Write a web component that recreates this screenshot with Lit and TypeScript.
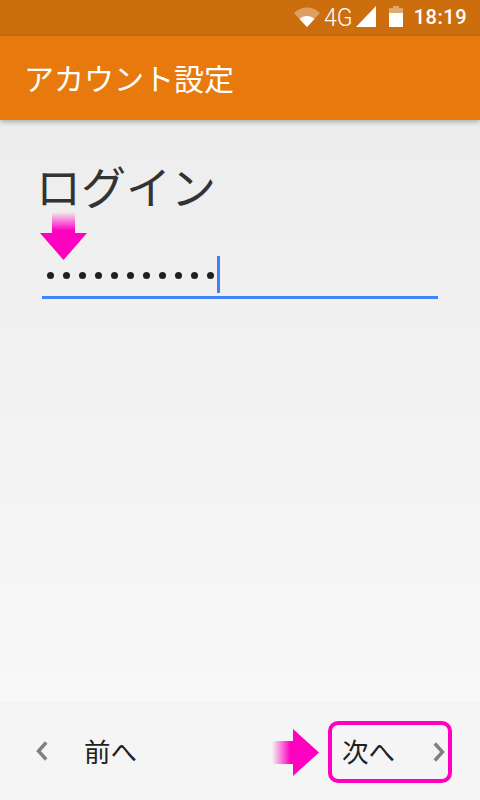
import { LitElement, html, css } from "lit";
import { customElement } from "lit/decorators.js";

@customElement("app-root")
export class AppRoot extends LitElement {
  static styles = css`
    :host {
      display: flex;
      flex-direction: column;
      position: relative;
      width: 480px;
      height: 800px;
      overflow: hidden;
      font-family: Roboto, "Noto Sans CJK JP", sans-serif;
      background: #f5f5f5;
    }
    .status {
      height: 36px;
      background: #cc6d0e;
      display: flex;
      align-items: center;
      justify-content: flex-end;
      color: #fff;
      flex: none;
    }
    .wifi { margin-right: 4px; margin-top: -2px; }
    .net {
      font-size: 26.5px;
      font-weight: 300;
      line-height: 36px;
      margin-right: 4px;
      width: 28px;
      transform: scaleX(0.87);
      transform-origin: left;
      white-space: nowrap;
      position: relative;
      top: -1px;
    }
    .sig { margin-right: 13px; margin-top: -3px; }
    .bat { margin-right: 11px; margin-top: -3px; }
    .time { font-size: 20px; font-weight: 500; margin-right: 13px; letter-spacing: 0.5px; position: relative; top: -1px; }
    .bar {
      height: 84px;
      flex: none;
      background: #e8790d;
      box-shadow: 0 2px 5px rgba(0, 0, 0, 0.28);
      display: flex;
      align-items: center;
      padding-left: 24px;
      color: #fff;
      font-size: 30px;
      position: relative;
      z-index: 1;
    }
    .bar span { position: relative; top: -1px; }
    .content {
      flex: 1;
      background: linear-gradient(#ededed, #f8f8f8);
      padding: 40px 42px 0 36px;
    }
    h1 {
      margin: 0;
      font-size: 45px;
      line-height: 60px;
      font-weight: 400;
      color: #333;
    }
    .field {
      margin: 23px 0 0 6px;
      height: 56px;
      box-sizing: border-box;
      border-bottom: 3px solid #3f84f8;
      display: flex;
      align-items: flex-start;
      padding: 13px 0 0 5px;
    }
    .dots { display: flex; gap: 9px; margin-top: 16px; }
    .dots i { width: 7px; height: 7px; border-radius: 50%; background: #1f1f1f; display: block; }
    .caret { width: 3px; height: 37px; background: #3f84f8; margin-left: 3px; }
    .footer {
      height: 98px;
      flex: none;
      background: #f5f5f5;
      border-top: 1px solid #f0f0f0;
      display: flex;
      align-items: center;
      justify-content: space-between;
      box-sizing: border-box;
      padding: 0 28px 0 36px;
      color: #212121;
      font-size: 26.5px;
    }
    .btn { display: flex; align-items: center; }
    .prev span { margin-left: 36px; margin-bottom: 3px; }
    .prev svg, .next svg { margin-bottom: 1px; }
    .next span { margin-bottom: 3px; }
    .next {
      border: 4px solid #ff00c0;
      border-radius: 10px;
      width: 124px;
      height: 62px;
      box-sizing: border-box;
      justify-content: space-between;
      padding: 0 3px 0 10px;
    }
    .next-wrap { margin-top: 1px; }
    .overlay { position: absolute; pointer-events: none; }
    .down { left: 40px; top: 212px; }
    .right { left: 272px; top: 729px; }
  `;

  render() {
    return html`
      <div class="status">
        <svg class="wifi" width="26" height="20" viewBox="0 0 26 20">
          <path d="M0 6 C7 -1.5 19 -1.5 26 6 L13 20 Z" fill="#fff" fill-opacity="0.35"/>
          <path d="M5.5 12 C9.5 8 16.5 8 20.5 12 L13 20 Z" fill="#fff"/>
        </svg>
        <span class="net">4G</span>
        <svg class="sig" width="20" height="21" viewBox="0 0 20 21"><path d="M20 0V21H0Z" fill="#fff"/></svg>
        <svg class="bat" width="14" height="21" viewBox="0 0 14 21">
          <path d="M4 0H10V2H14V21H0V2H4Z" fill="#fff" fill-opacity="0.4"/>
          <rect x="0" y="7" width="14" height="14" fill="#fff"/>
        </svg>
        <span class="time">18:19</span>
      </div>
      <div class="bar"><span>アカウント設定</span></div>
      <div class="content">
        <h1>ログイン</h1>
        <div class="field">
          <div class="dots">${Array.from({ length: 11 }, () => html`<i></i>`)}</div>
          <div class="caret"></div>
        </div>
      </div>
      <div class="footer">
        <div class="btn prev">
          <svg width="12" height="20" viewBox="0 0 12 20"><path d="M10.2 1.5 L2.5 10 L10.2 18.5" fill="none" stroke="#808080" stroke-width="3.4"/></svg>
          <span>前へ</span>
        </div>
        <div class="next-wrap">
          <div class="btn next">
            <span>次へ</span>
            <svg width="12" height="20" viewBox="0 0 12 20"><path d="M1.8 1.5 L9.5 10 L1.8 18.5" fill="none" stroke="#808080" stroke-width="3.4"/></svg>
          </div>
        </div>
      </div>
      <svg class="overlay down" width="48" height="50" viewBox="0 0 48 50">
        <defs><linearGradient id="gd" x1="0" y1="0" x2="0" y2="1">
          <stop offset="0" stop-color="#ff00c0" stop-opacity="0"/>
          <stop offset="0.8" stop-color="#ff00c0"/>
        </linearGradient></defs>
        <rect x="12" y="0" width="23" height="23" fill="url(#gd)"/>
        <path d="M0 21H47L23.5 48Z" fill="#ff00c0"/>
      </svg>
      <svg class="overlay right" width="48" height="48" viewBox="0 0 48 48">
        <defs><linearGradient id="gr" x1="0" y1="0" x2="1" y2="0">
          <stop offset="0" stop-color="#ff00c0" stop-opacity="0"/>
          <stop offset="0.8" stop-color="#ff00c0"/>
        </linearGradient></defs>
        <rect x="0" y="12" width="23" height="23" fill="url(#gr)"/>
        <path d="M21 0V47L47 23.5Z" fill="#ff00c0"/>
      </svg>
    `;
  }
}
